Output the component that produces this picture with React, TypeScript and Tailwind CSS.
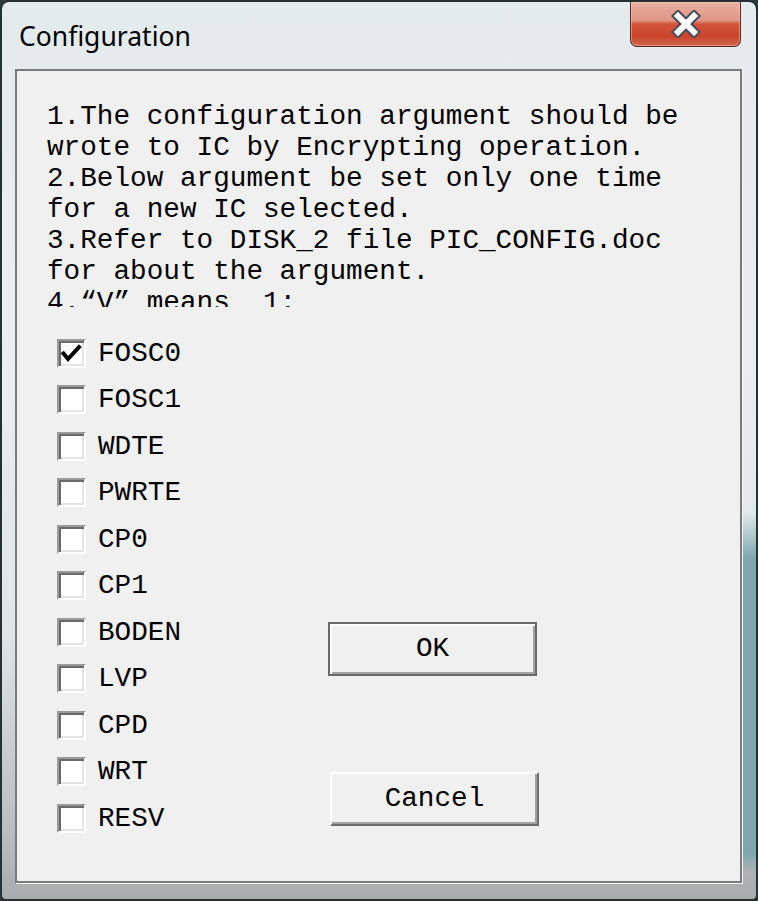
import React from "react";

const items = ["FOSC0", "FOSC1", "WDTE", "PWRTE", "CP0", "CP1", "BODEN", "LVP", "CPD", "WRT", "RESV"];

const mono = { fontFamily: '"Liberation Mono", "DejaVu Sans Mono", monospace' };

function CheckBox({ checked }: { checked: boolean }) {
  return (
    <div className="w-[29px] h-[29px] shrink-0 bg-white border-2 border-t-[#9a9a9a] border-l-[#9a9a9a] border-b-white border-r-white shadow-[inset_2px_2px_0_#6a6a6a,inset_-2px_-2px_0_#e4e4e4]">
      {checked && (
        <svg width="25" height="25" viewBox="0 0 25 25" className="block">
          <path d="M4.5 12.5 L9 18 L20 6" fill="none" stroke="#000" strokeWidth="4" strokeLinecap="square" strokeLinejoin="miter" />
        </svg>
      )}
    </div>
  );
}

export default function App() {
  return (
    <div className="w-[758px] h-[901px] bg-[#2b3a3d] overflow-hidden">
      <div className="w-full h-full flex flex-col rounded-t-[9px] rounded-b-[6px] border-2 border-[#263134] bg-[linear-gradient(180deg,transparent_0%,transparent_55%,#dfe8ea_57%,#7fa7ae_62%,#7fa7ae_95%,transparent_97%),linear-gradient(180deg,#e4ebed_0%,#e9eef0_40%,#dfe6e8_70%,#b9bebf_92%,#a9acad_100%)] bg-[length:13px_100%,100%_100%] bg-[position:right_top,left_top] bg-no-repeat">
        {/* title bar */}
        <div className="h-[67px] shrink-0 flex justify-between items-start">
          <div
            className="pl-[17px] pt-[16px] text-[26.5px] leading-[36px] text-black"
            style={{ fontFamily: '"Noto Sans", "Open Sans", sans-serif' }}
          >
            Configuration
          </div>
          <div className="mr-[15px] w-[111px] h-[45px] rounded-b-[7px] border border-t-0 border-[#5c2620] bg-[linear-gradient(180deg,#eab0a3_0%,#df9484_42%,#d3543a_50%,#c9452b_78%,#d0674f_100%)] shadow-[inset_0_0_0_1px_rgba(255,210,200,0.45)] flex items-center justify-center">
            <svg width="32" height="28" viewBox="0 0 32 28" className="block">
              <path d="M8 6 L24 22 M24 6 L8 22" stroke="#4a4a5c" strokeWidth="10" strokeLinecap="square" />
              <path d="M8 6 L24 22 M24 6 L8 22" stroke="#ffffff" strokeWidth="6" strokeLinecap="square" />
            </svg>
          </div>
        </div>
        {/* client area */}
        <div className="mx-[13px] mr-[14px] mb-[16px] flex-1 flex flex-col border-2 border-[#7b7b7b] bg-[#f0f0f0] shadow-[1px_1px_0_#f6f6f6]">
          <div
            className="ml-[30px] mt-[30px] h-[206px] overflow-hidden text-[27.7px] leading-[31px] text-black whitespace-pre"
            style={mono}
          >
            {"1.The configuration argument should be\nwrote to IC by Encrypting operation.\n2.Below argument be set only one time\nfor a new IC selected.\n3.Refer to DISK_2 file PIC_CONFIG.doc\nfor about the argument.\n4.\u201cV\u201d means  1:"}
          </div>
          <div className="mt-[23px] flex">
            <div className="w-[311px] pl-[40px] flex flex-col">
              {items.map((name, i) => (
                <div key={name} className="h-[46.5px] flex items-center gap-[12px]">
                  <CheckBox checked={i === 0} />
                  <span className="text-[27.7px] leading-[31px] text-black" style={mono}>
                    {name}
                  </span>
                </div>
              ))}
            </div>
            <div className="pt-[292px] flex flex-col">
              <div
                className="w-[209px] h-[54px] border-2 border-[#6a6a6a] bg-[#f0f0f0] shadow-[inset_2px_2px_0_#ffffff,inset_-2px_-2px_0_#a2a2a2] flex items-center justify-center text-[27.7px] text-black"
                style={mono}
              >
                OK
              </div>
              <div
                className="mt-[96px] ml-[2px] w-[209px] h-[54px] border-2 border-t-white border-l-white border-b-[#6c6c6c] border-r-[#6c6c6c] bg-[#f0f0f0] shadow-[inset_-2px_-2px_0_#a2a2a2] flex items-center justify-center text-[27.7px] text-black"
                style={mono}
              >
                Cancel
              </div>
            </div>
          </div>
        </div>
      </div>
    </div>
  );
}
